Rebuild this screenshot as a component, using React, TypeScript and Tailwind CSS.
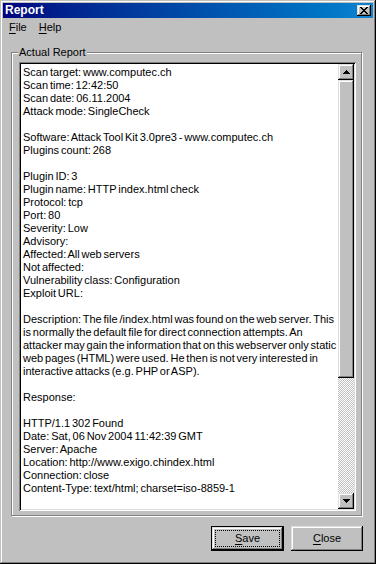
const lines = [
  "Scan target: www.computec.ch",
  "Scan time: 12:42:50",
  "Scan date: 06.11.2004",
  "Attack mode: SingleCheck",
  "",
  "Software: Attack Tool Kit 3.0pre3 - www.computec.ch",
  "Plugins count: 268",
  "",
  "Plugin ID: 3",
  "Plugin name: HTTP index.html check",
  "Protocol: tcp",
  "Port: 80",
  "Severity: Low",
  "Advisory:",
  "Affected: All web servers",
  "Not affected:",
  "Vulnerability class: Configuration",
  "Exploit URL:",
  "",
  "Description: The file /index.html was found on the web server. This",
  "is normally the default file for direct connection attempts. An",
  "attacker may gain the information that on this webserver only static",
  "web pages (HTML) were used. He then is not very interested in",
  "interactive attacks (e.g. PHP or ASP).",
  "",
  "Response:",
  "",
  "HTTP/1.1 302 Found",
  "Date: Sat, 06 Nov 2004 11:42:39 GMT",
  "Server: Apache",
  "Location: http://www.exigo.chindex.html",
  "Connection: close",
  "Content-Type: text/html; charset=iso-8859-1",
];

// classic raised bevel
const raised =
  "shadow-[inset_-1px_-1px_#000,inset_1px_1px_#dfdfdf,inset_-2px_-2px_#808080,inset_2px_2px_#fff]";

function Arrow({ down }: { down?: boolean }) {
  const rows = [
    [3, 1],
    [2, 3],
    [1, 5],
    [0, 7],
  ];
  return (
    <svg width="7" height="4" shapeRendering="crispEdges">
      {rows.map(([x, w], i) => (
        <rect key={i} x={x} y={down ? 3 - i : i} width={w} height={1} fill="#000" />
      ))}
    </svg>
  );
}

function CloseGlyph() {
  const rows = [
    [0, 1, 6, 7],
    [1, 2, 5, 6],
    [2, 3, 4, 5],
    [3, 4],
    [2, 3, 4, 5],
    [1, 2, 5, 6],
    [0, 1, 6, 7],
  ];
  return (
    <svg width="8" height="7" shapeRendering="crispEdges">
      {rows.map((xs, y) => xs.map((x) => <rect key={`${y}-${x}`} x={x} y={y} width={1} height={1} fill="#000" />))}
    </svg>
  );
}

export default function App() {
  return (
    <div
      className="flex h-[564px] w-[376px] flex-col bg-[#c0c0c0] p-[3px] font-['Liberation_Sans',Arial,sans-serif] text-[11px] text-black shadow-[inset_-1px_-1px_#000,inset_1px_1px_#c0c0c0,inset_-2px_-2px_#808080,inset_2px_2px_#fff]"
    >
      {/* caption */}
      <div className="flex h-[15px] items-center justify-between bg-linear-to-r from-[#000080] to-[#1084d0] px-[2px]">
        <span className="text-[12px] font-bold leading-[15px] text-white">Report</span>
        <div className={`flex h-[11px] w-[14px] items-center justify-center bg-[#c0c0c0] ${raised}`}>
          <CloseGlyph />
        </div>
      </div>

      {/* menu */}
      <div className="flex h-[19px] items-center leading-[13px]">
        <span className="px-[6px]">
          <u className="underline-offset-[2px]">F</u>ile
        </span>
        <span className="px-[6px]">
          <u className="underline-offset-[2px]">H</u>elp
        </span>
      </div>

      {/* group box */}
      <div className="relative mt-[15px] mr-[11px] ml-[8px] h-[464px] border border-[#808080] pt-[9px] pr-[5px] pb-[4px] pl-[7px] shadow-[1px_1px_0_#fff,inset_1px_1px_0_#fff]">
        <span className="absolute top-[-7px] left-[6px] bg-[#c0c0c0] px-[1px] leading-[13px]">Actual Report</span>

        <div className="flex h-full bg-white p-[2px] shadow-[inset_1px_1px_#808080,inset_-1px_-1px_#fff,inset_2px_2px_#000,inset_-2px_-2px_#dfdfdf]">
          <div className="flex-1 overflow-hidden pt-[2px] pl-[2px] [word-spacing:-1.2px]">
            {lines.map((l, i) => (
              <div key={i} className="h-[13px] whitespace-pre leading-[13px]">
                {l}
              </div>
            ))}
          </div>
          <div className="flex w-[16px] flex-col">
            <div className={`flex h-[16px] items-center justify-center bg-[#c0c0c0] ${raised}`}>
              <Arrow />
            </div>
            <div className={`h-[298px] bg-[#c0c0c0] ${raised}`} />
            <div className="flex-1 bg-[repeating-conic-gradient(#c0c0c0_0%_25%,#ffffff_0%_50%)] bg-[length:2px_2px]" />
            <div className={`flex h-[16px] items-center justify-center bg-[#c0c0c0] ${raised}`}>
              <Arrow down />
            </div>
          </div>
        </div>
      </div>

      {/* buttons */}
      <div className="mt-[10px] flex justify-end gap-[7px] pr-[10px]">
        <button className="h-[25px] w-[73px] border border-black bg-[#c0c0c0] p-0">
          <div className={`relative flex h-full w-full items-center justify-center ${raised}`}>
            <span className="absolute inset-[3px] border border-dotted border-black" />
            <span className="leading-[13px]">
              <u className="underline-offset-[2px]">S</u>ave
            </span>
          </div>
        </button>
        <button className={`flex h-[25px] w-[72px] items-center justify-center bg-[#c0c0c0] ${raised}`}>
          <span className="leading-[13px]">
            <u className="underline-offset-[2px]">C</u>lose
          </span>
        </button>
      </div>
    </div>
  );
}
